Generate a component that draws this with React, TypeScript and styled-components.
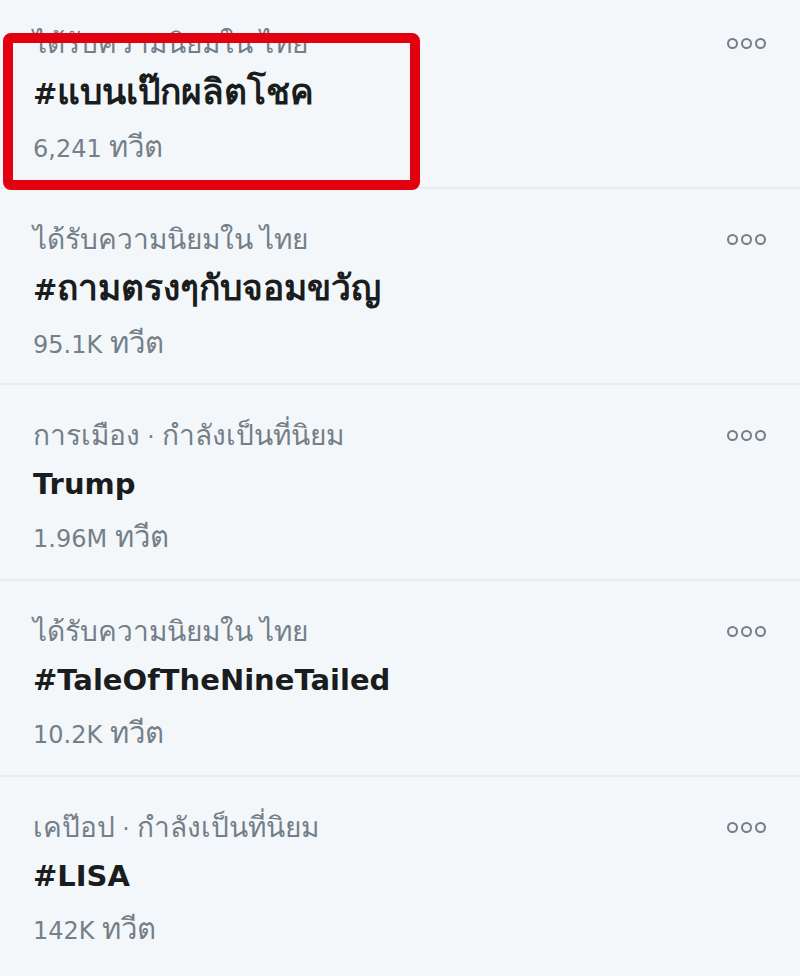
import React from "react";
import styled, { createGlobalStyle } from "styled-components";

const GlobalStyle = createGlobalStyle`
  html, body {
    margin: 0;
    padding: 0;
    background: #f4f7f9;
  }
  body {
    font-family: "DejaVu Sans", "Noto Sans", sans-serif;
    overflow: hidden;
  }
`;

const Page = styled.div`
  position: relative;
  width: 800px;
  height: 976px;
  overflow: hidden;
  background: #f4f7f9;
`;

const List = styled.ul`
  list-style: none;
  margin: -7px 0 0 0;
  padding: 0;
`;

const Item = styled.li<{ $last?: boolean }>`
  display: grid;
  grid-template-columns: 1fr auto;
  height: 196px;
  box-sizing: border-box;
  padding: 35px 34px 0 33px;
  border-bottom: ${(p) => (p.$last ? "none" : "2px solid #e7ecf0")};
`;

const Texts = styled.div`
  display: flex;
  flex-direction: column;
`;

const Category = styled.div`
  font-size: 23px;
  line-height: 32px;
  color: #737f89;
  height: 32px;
  white-space: nowrap;
`;

const Title = styled.div`
  margin-top: 14px;
  font-size: 29px;
  line-height: 36px;
  font-weight: 700;
  color: #1a1d20;
  white-space: nowrap;
`;

const Count = styled.div`
  margin-top: 19px;
  font-size: 24px;
  line-height: 32px;
  color: #737f89;
  white-space: nowrap;
`;

const Thai = styled.span`
  font-size: 1.22em;
`;

const More = styled.div`
  display: flex;
  gap: 3px;
  padding-top: 10px;
`;

const Dot = styled.span`
  width: 7px;
  height: 7px;
  border: 2.5px solid #757f88;
  border-radius: 50%;
`;

const Highlight = styled.div`
  position: absolute;
  left: 3px;
  top: 33px;
  width: 417px;
  height: 157px;
  box-sizing: border-box;
  border: 10px solid #e3000f;
  border-radius: 8px;
  pointer-events: none;
`;

type Trend = { category: string; title: string; count: string };

const trends: Trend[] = [
  { category: "ได้รับความนิยมใน ไทย", title: "#แบนเป๊กผลิตโชค", count: "6,241 ทวีต" },
  { category: "ได้รับความนิยมใน ไทย", title: "#ถามตรงๆกับจอมขวัญ", count: "95.1K ทวีต" },
  { category: "การเมือง · กำลังเป็นที่นิยม", title: "Trump", count: "1.96M ทวีต" },
  { category: "ได้รับความนิยมใน ไทย", title: "#TaleOfTheNineTailed", count: "10.2K ทวีต" },
  { category: "เคป๊อป · กำลังเป็นที่นิยม", title: "#LISA", count: "142K ทวีต" },
];

function Mixed({ text }: { text: string }) {
  const parts = text.split(/([\u0E00-\u0E7F]+)/);
  return (
    <>
      {parts.map((p, i) =>
        /[\u0E00-\u0E7F]/.test(p) ? <Thai key={i}>{p}</Thai> : <React.Fragment key={i}>{p}</React.Fragment>
      )}
    </>
  );
}

export default function App() {
  return (
    <Page>
      <GlobalStyle />
      <List>
        {trends.map((t, i) => (
          <Item key={i} $last={i === trends.length - 1}>
            <Texts>
              <Category>
                <Mixed text={t.category} />
              </Category>
              <Title>
                <Mixed text={t.title} />
              </Title>
              <Count>
                <Mixed text={t.count} />
              </Count>
            </Texts>
            <More>
              <Dot />
              <Dot />
              <Dot />
            </More>
          </Item>
        ))}
      </List>
      <Highlight />
    </Page>
  );
}
